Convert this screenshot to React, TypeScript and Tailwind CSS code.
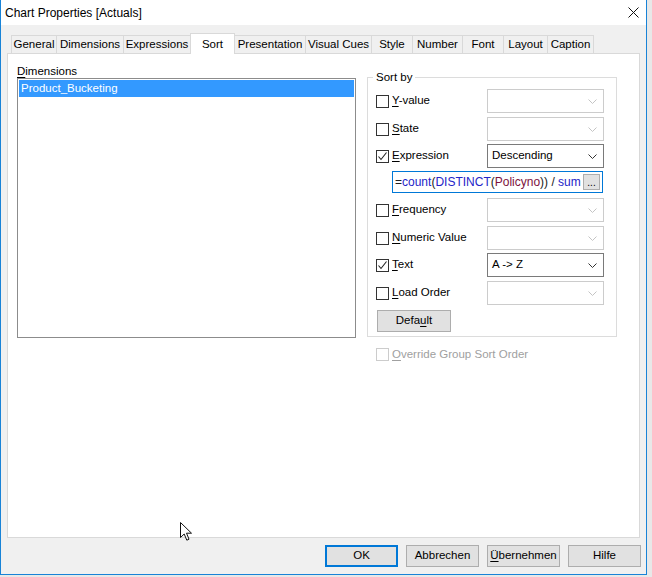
const font = { fontFamily: '"Segoe UI", "Liberation Sans", Arial, sans-serif' };

const tabs = [
  { label: "General", w: "w-[46px]" },
  { label: "Dimensions", w: "w-[68px]" },
  { label: "Expressions", w: "w-[68px]" },
  { label: "Sort", w: "w-[45px]", active: true },
  { label: "Presentation", w: "w-[72px]" },
  { label: "Visual Cues", w: "w-[67px]" },
  { label: "Style", w: "w-[42px]" },
  { label: "Number", w: "w-[51px]" },
  { label: "Font", w: "w-[42px]" },
  { label: "Layout", w: "w-[45px]" },
  { label: "Caption", w: "w-[47px]" },
];

const Chevron = ({ dark }: { dark?: boolean }) => (
  <svg width="9" height="5" viewBox="0 0 9 5">
    <polyline
      points="0.5,0.5 4.5,4.5 8.5,0.5"
      fill="none"
      stroke={dark ? "#333333" : "#c4c4c4"}
      strokeWidth="1"
    />
  </svg>
);

const Combo = ({ value }: { value?: string }) => (
  <div
    className={
      value
        ? "flex h-[24px] w-[117px] items-center justify-between border border-[#7a7a7a] bg-white pl-[4px] pr-[6px]"
        : "flex h-[24px] w-[117px] items-center justify-between border border-[#cccccc] bg-white pl-[4px] pr-[6px]"
    }
  >
    <span className="text-[11.5px] text-black">{value}</span>
    <Chevron dark={!!value} />
  </div>
);

const Check = ({ checked, disabled }: { checked?: boolean; disabled?: boolean }) => (
  <div
    className={
      disabled
        ? "flex h-[13px] w-[13px] shrink-0 items-center justify-center border border-[#cccccc] bg-white"
        : "flex h-[13px] w-[13px] shrink-0 items-center justify-center border border-[#333333] bg-white"
    }
  >
    {checked && (
      <svg width="11" height="11" viewBox="0 0 11 11">
        <polyline points="1.5,5.5 4,8.5 9.5,1.5" fill="none" stroke="#222222" strokeWidth="1.1" />
      </svg>
    )}
  </div>
);

// label with the access key underlined
const Label = ({ k, rest, pre = "", gray }: { k: string; rest: string; pre?: string; gray?: boolean }) => (
  <span className={gray ? "text-[11.5px] text-[#a0a0a0]" : "text-[11.5px] text-black"}>
    {pre}
    <span className="underline underline-offset-[2px]">{k}</span>
    {rest}
  </span>
);

const SortRow = ({
  k,
  rest,
  checked,
  value,
  className = "",
}: {
  k: string;
  rest: string;
  checked?: boolean;
  value?: string;
  className?: string;
}) => (
  <div className={"flex h-[24px] items-center " + className}>
    <div className="flex w-[111px] items-center gap-[3px]">
      <Check checked={checked} />
      <Label k={k} rest={rest} />
    </div>
    <Combo value={value} />
  </div>
);

const Btn = ({ children, primary }: { children: React.ReactNode; primary?: boolean }) => (
  <div
    className={
      primary
        ? "flex h-[22px] w-[73px] items-center justify-center border-2 border-[#0078d7] bg-[#e1e1e1] text-[11.5px] text-black"
        : "flex h-[22px] w-[73px] items-center justify-center border border-[#adadad] bg-[#e1e1e1] text-[11.5px] text-black"
    }
  >
    {children}
  </div>
);

export default function App() {
  return (
    <div className="h-[577px] w-[652px] bg-[#e8e8e8]" style={font}>
      <div className="relative flex h-[575px] w-[647px] flex-col border-x border-b border-[#1883d7] bg-[#f0f0f0]">
        {/* title bar */}
        <div className="flex h-[25px] items-center justify-between bg-white pl-[4px] pr-[7px]">
          <span className="text-[12px] text-black">Chart Properties [Actuals]</span>
          <svg width="11" height="11" viewBox="0 0 11 11">
            <path d="M0.5,0.5 L10.5,10.5 M10.5,0.5 L0.5,10.5" stroke="#111111" strokeWidth="1" />
          </svg>
        </div>

        {/* tabs */}
        <div className="relative z-10 mt-[8px] flex h-[20px] items-start pl-[11px]">
          {tabs.map((t) =>
            t.active ? (
              <div
                key={t.label}
                className={`-ml-px flex h-[21px] items-start justify-center border-x border-t border-[#d9d9d9] bg-white pt-[2px] text-[11.5px] text-black ${t.w}`}
              >
                {t.label}
              </div>
            ) : (
              <div
                key={t.label}
                className={`-ml-px mt-[2px] flex h-[18px] items-center justify-center border-x border-t border-[#d9d9d9] bg-[#f0f0f0] text-[11.5px] text-black ${t.w}`}
              >
                {t.label}
              </div>
            )
          )}
        </div>

        {/* panel */}
        <div className="ml-[6px] flex h-[485px] w-[633px] border border-[#d9d9d9] bg-white pl-[9px]">
          <div className="flex w-[339px] flex-col pt-[8px]">
            <div className="h-[16px] leading-[16px]">
              <Label k="D" rest="imensions" />
            </div>
            <div className="h-[260px] border border-[#8c8c8c] bg-white p-[1px]">
              <div className="flex h-[17px] items-center bg-[#3399ff] pl-[2px] text-[11.5px] text-white">
                Product_Bucketing
              </div>
            </div>
          </div>

          <div className="ml-[11px] flex flex-col">
            <fieldset className="mt-[16px] w-[250px] border border-[#dcdcdc] pb-[4px] pl-[8px] pr-[12px]">
              <legend className="ml-[-3px] px-[3px] text-[11.5px] leading-[14px] text-black">Sort by</legend>
              <div className="flex flex-col pt-[5px]">
                <SortRow k="Y" rest="-value" />
                <SortRow k="S" rest="tate" className="mt-[4px]" />
                <SortRow k="E" rest="xpression" checked value="Descending" className="mt-[3px]" />
                <div className="mt-[3px] pl-[16px]">
                  <div className="flex h-[22px] w-[211px] items-center border border-[#0078d7] bg-white pl-[2px] pr-[2px]">
                    <span className="min-w-0 flex-1 overflow-hidden whitespace-nowrap text-[12px] text-[#202020]">
                      =<span className="text-[#2424c8]">count</span>(<span className="text-[#2424c8]">DISTINCT</span>(
                      <span className="text-[#7d1240]">Policyno</span>)) / <span className="text-[#2424c8]">sum</span>
                    </span>
                    <div className="flex h-[16px] w-[17px] shrink-0 items-end justify-center border border-[#adadad] bg-[#e1e1e1] text-[10px] leading-[12px] text-black">
                      ...
                    </div>
                  </div>
                </div>
                <SortRow k="F" rest="requency" className="mt-[5px]" />
                <SortRow k="N" rest="umeric Value" className="mt-[4px]" />
                <SortRow k="T" rest="ext" checked value="A -> Z" className="mt-[3px]" />
                <SortRow k="L" rest="oad Order" className="mt-[4px]" />
                <div className="ml-[1px] mt-[5px] flex h-[22px] w-[74px] items-center justify-center border border-[#adadad] bg-[#e1e1e1]">
                  <Label pre="Defa" k="u" rest="lt" />
                </div>
              </div>
            </fieldset>
            <div className="mt-[11px] flex h-[13px] items-center gap-[3px] pl-[9px]">
              <Check disabled />
              <Label k="O" rest="verride Group Sort Order" gray />
            </div>
          </div>
        </div>

        {/* buttons */}
        <div className="mt-[7px] flex gap-[8px] pl-[324px]">
          <Btn primary>OK</Btn>
          <Btn>Abbrechen</Btn>
          <Btn>
            <Label k="Ü" rest="bernehmen" />
          </Btn>
          <Btn>Hilfe</Btn>
        </div>

        {/* mouse pointer */}
        <svg className="absolute left-[179px] top-[522px]" width="13" height="20" viewBox="0 0 13 20">
          <path
            d="M0.5,0.5 L0.5,15.5 L4.2,12 L6.8,18.2 L9,17.2 L6.5,11.2 L11.5,11.2 Z"
            fill="white"
            stroke="#111111"
            strokeWidth="1"
          />
        </svg>
      </div>
    </div>
  );
}
